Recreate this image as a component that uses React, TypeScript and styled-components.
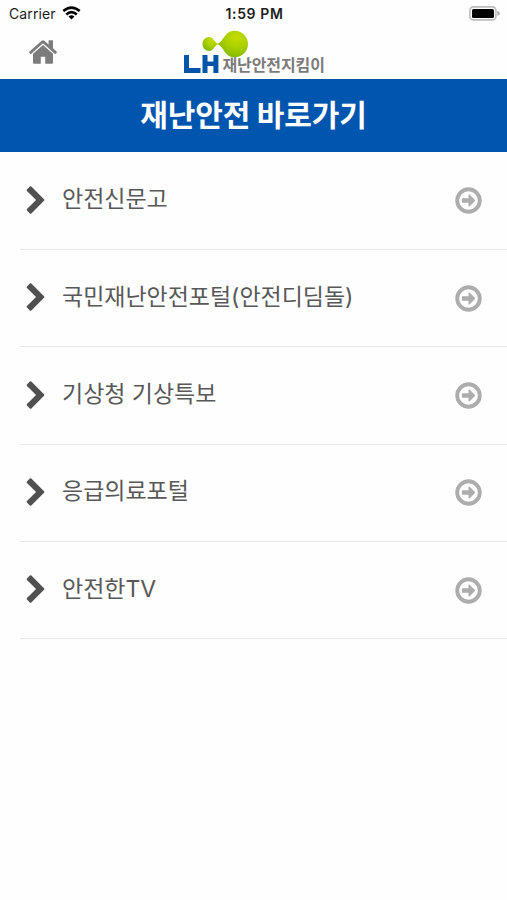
import React from 'react';
import styled, { createGlobalStyle } from 'styled-components';

const GlobalStyle = createGlobalStyle`
  * { box-sizing: border-box; }
  html, body { margin: 0; background: #fefefe; }
  body { font-family: "Noto Sans CJK KR", "Noto Sans", sans-serif; }
`;

const Screen = styled.div`
  width: 100%;
  height: 900px;
  overflow: hidden;
  background: #fefefe;
`;

const StatusBar = styled.div`
  display: grid;
  grid-template-columns: 1fr auto 1fr;
  align-items: center;
  height: 28px;
  padding: 0 7px 0 9px;
  font-family: Inter, sans-serif;
  color: #1c1c1c;
`;

const Carrier = styled.div`
  display: flex;
  align-items: center;
  gap: 6px;
  padding-bottom: 2px;
  font-size: 14px;
  letter-spacing: 0.1px;
`;

const Time = styled.div`
  padding-bottom: 2px;
  font-size: 14px;
  font-weight: 600;
  letter-spacing: 0.6px;
`;

const BatterySlot = styled.div`
  display: flex;
  justify-content: flex-end;
  padding-bottom: 2px;
`;

const Header = styled.header`
  display: grid;
  grid-template-columns: 1fr auto 1fr;
  height: 51px;
`;

const HomeButton = styled.a`
  justify-self: start;
  margin: 12px 0 0 29px;
  height: 24px;
  color: #7c7c7c;
`;

const Logo = styled.div`
  display: flex;
  flex-direction: column;
  width: 142px;
  height: 51px;
`;

const Drops = styled.svg`
  display: block;
  flex: none;
  margin: 2px 0 0 19px;
`;

const Wordmark = styled.div`
  display: flex;
  align-items: flex-start;
  height: 19px;
  margin-top: -3px;
`;

const Brand = styled.svg`
  flex: none;
  margin-left: 1px;
`;

const BrandName = styled.span`
  margin-left: 4px;
  font-size: 16px;
  line-height: 19px;
  font-weight: 700;
  letter-spacing: -0.1px;
  white-space: nowrap;
  color: #7c7a7a;
`;

const Banner = styled.h1`
  display: flex;
  align-items: center;
  justify-content: center;
  height: 73px;
  margin: 0;
  padding-bottom: 5px;
  background: #0055ae;
  color: #fff;
  font-size: 30px;
  line-height: 40px;
  font-weight: 700;
  letter-spacing: -0.1px;
`;

const List = styled.ul`
  margin: 0;
  padding: 0.8px 0 0 20px;
  list-style: none;
`;

const Row = styled.li`
  display: flex;
  align-items: center;
  height: 97.3px;
  padding: 0 25px 0 6px;
  border-bottom: 1px solid #e8e8e8;
  color: #505050;
`;

const Chevron = styled.svg`
  flex: none;
  margin-top: -1.5px;
`;

const Label = styled.span`
  flex: 1;
  margin: -3px 0 0 17px;
  font-family: Inter, "Noto Sans CJK KR", sans-serif;
  font-size: 23px;
  line-height: 34px;
  letter-spacing: -0.03px;
  white-space: nowrap;
  color: #585858;
`;

const HomeIcon = () => (
  <svg width="28" height="24" viewBox="89 240 1614 1310" preserveAspectRatio="none" fill="currentColor">
    <path d="M1472 992v480q0 26-19 45t-45 19h-384v-384h-256v384h-384q-26 0-45-19t-19-45v-480q0-1 .5-3t.5-3l575-474 575 474q1 2 1 6zm223-69l-62 74q-8 9-21 11h-3q-13 0-21-7l-692-577-692 577q-12 8-24 7-13-2-21-11l-62-74q-8-10-7-23.500t11-21.500l719-599q32-26 76-26t76 26l244 204v-195q0-14 9-23t23-9h192q14 0 23 9t9 23v408l219 182q10 8 11 21.500t-7 23.500z" />
  </svg>
);

const ChevronIcon = () => (
  <Chevron width="19" height="28" viewBox="316 12 1096 1640" fill="currentColor">
    <path d="M1363 877l-742 742q-19 19-45 19t-45-19l-166-166q-19-19-19-45t19-45l531-531-531-531q-19-19-19-45t19-45l166-166q19-19 45-19t45 19l742 742q19 19 19 45t-19 45z" />
  </Chevron>
);

const GoIcon = () => (
  <svg width="27" height="27" viewBox="112 112 1568 1568" fill="#adadad">
    <circle cx="896" cy="896" r="656" fill="none" stroke="#adadad" strokeWidth="224" />
    <path d="M1280 896q0 14-9 23l-320 320q-9 9-23 9-13 0-22.500-9.500t-9.500-22.500v-192h-352q-13 0-22.500-9.500t-9.500-22.500v-192q0-13 9.500-22.500t22.500-9.500h352v-192q0-14 9-23t23-9q12 0 24 10l319 319q9 9 9 23z" />
  </svg>
);

const WifiIcon = () => (
  <svg width="19" height="14" viewBox="0 0 19 14" fill="none" stroke="#000" strokeWidth="2.700">
    <path d="M1.300 5.100Q9.500-2 17.700 5.100" />
    <path d="M4.200 8.500Q9.500 3.900 14.800 8.500" />
    <path d="M6.500 10.600Q9.500 8.100 12.500 10.600L9.500 13.600Z" fill="#000" stroke="none" />
  </svg>
);

const BatteryIcon = () => (
  <svg width="31" height="15" viewBox="0 0 31 15">
    <rect x="0.900" y="0.900" width="26" height="13" rx="3.500" fill="#fff" stroke="#bcbcbc" strokeWidth="1.600" />
    <rect x="3" y="3" width="22" height="9" rx="1.500" fill="#000" />
    <path d="M28.300 4.800Q31 6 31 7.400T28.300 10Z" fill="#aaa" />
  </svg>
);

const links = ['안전신문고', '국민재난안전포털(안전디딤돌)', '기상청 기상특보', '응급의료포털', '안전한TV'];

export default function App() {
  return (
    <Screen>
      <GlobalStyle />
      <StatusBar>
        <Carrier>Carrier <WifiIcon /></Carrier>
        <Time>1:59 PM</Time>
        <BatterySlot><BatteryIcon /></BatterySlot>
      </StatusBar>
      <Header>
        <HomeButton aria-label="홈"><HomeIcon /></HomeButton>
        <Logo>
          <Drops width="47" height="28" viewBox="0 0 47 28">
            <defs>
              <radialGradient id="lime" cx="0.650" cy="0.250" r="0.800">
                <stop offset="0" stopColor="#c5dc00" />
                <stop offset="0.500" stopColor="#a9d000" />
                <stop offset="1" stopColor="#7fb800" />
              </radialGradient>
            </defs>
            <path d="M0.500 14C0.500 10 3.500 7 7.300 7C11 7 12 11.500 16 14C12 16.500 11 21 7.300 21C3.500 21 .5 18 .5 14Z" fill="url(#lime)" />
            <path d="M15 14C22 12 22 .7 32.500 .7C40 .7 46 6.500 46 14S40 27.300 32.500 27.300C22 27.300 22 16 15 14Z" fill="url(#lime)" />
          </Drops>
          <Wordmark>
            <Brand role="img" aria-label="LH" width="35" height="18" viewBox="0 0 35 18" fill="none" stroke="#0055a9" strokeWidth="5">
              <path d="M2.500 0V15.500H16.500" />
              <path d="M21 0V18M31.900 0V18" />
              <path d="M21 8.800H32" strokeWidth="4.500" />
            </Brand>
            <BrandName>재난안전지킴이</BrandName>
          </Wordmark>
        </Logo>
      </Header>
      <Banner>재난안전 바로가기</Banner>
      <List>
        {links.map((label) => (
          <Row key={label}>
            <ChevronIcon />
            <Label>{label}</Label>
            <GoIcon />
          </Row>
        ))}
      </List>
    </Screen>
  );
}
